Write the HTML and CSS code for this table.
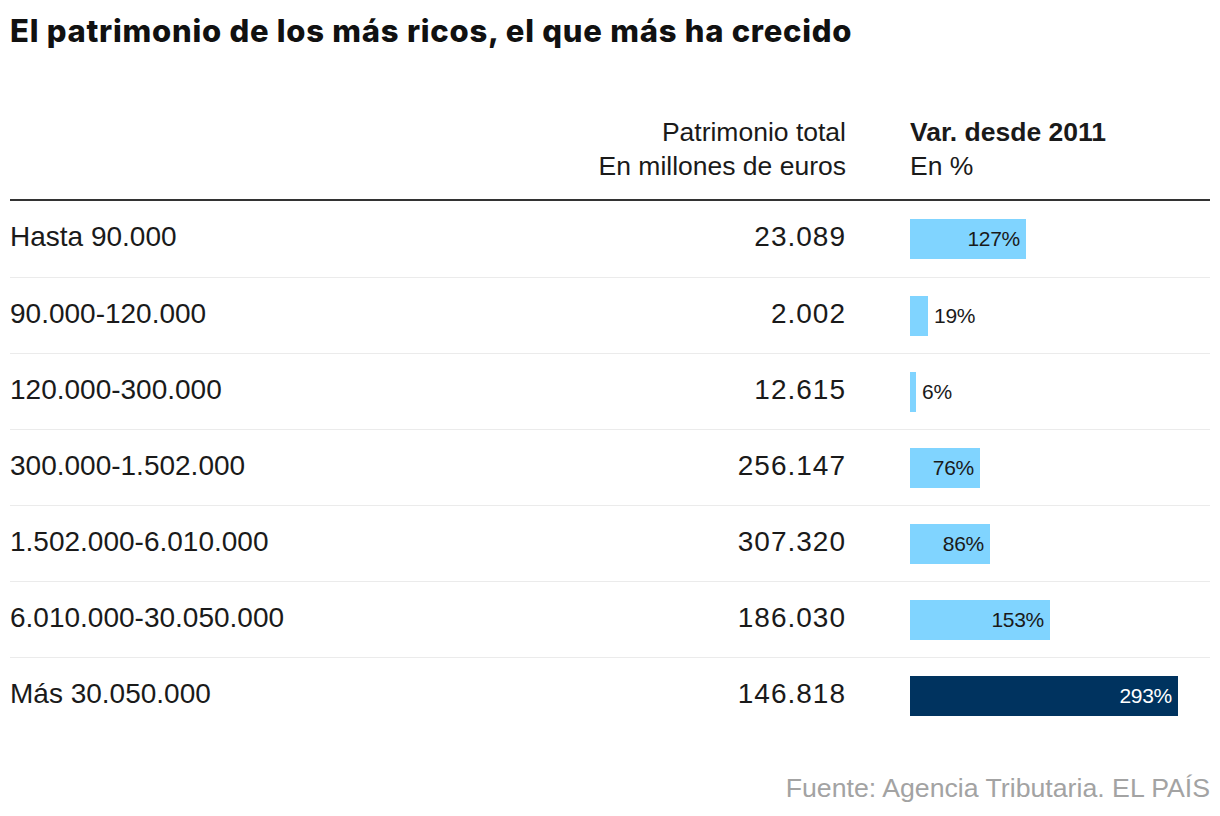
FILE: index.html
```html
<!DOCTYPE html>
<html lang="es">
<head>
<meta charset="utf-8">
<title>El patrimonio de los más ricos</title>
<link rel="stylesheet" href="styles.css">
</head>
<body>
<div class="page">
  <h1 class="title">El patrimonio de los más ricos, el que más ha crecido</h1>
  <div class="table">
    <div class="head">
      <div></div>
      <div class="hcol right">
        <div>Patrimonio total</div>
        <div>En millones de euros</div>
      </div>
      <div class="hcol">
        <div class="bold">Var. desde 2011</div>
        <div>En %</div>
      </div>
    </div>
    <div class="row">
      <div class="label">Hasta 90.000</div>
      <div class="value">23.089</div>
      <div class="barcell"><div class="bar" style="width:116px"><span class="in">127%</span></div></div>
    </div>
    <div class="row">
      <div class="label">90.000-120.000</div>
      <div class="value">2.002</div>
      <div class="barcell"><div class="bar" style="width:18px"></div><span class="out">19%</span></div>
    </div>
    <div class="row">
      <div class="label">120.000-300.000</div>
      <div class="value">12.615</div>
      <div class="barcell"><div class="bar" style="width:6px"></div><span class="out">6%</span></div>
    </div>
    <div class="row">
      <div class="label">300.000-1.502.000</div>
      <div class="value">256.147</div>
      <div class="barcell"><div class="bar" style="width:70px"><span class="in">76%</span></div></div>
    </div>
    <div class="row">
      <div class="label">1.502.000-6.010.000</div>
      <div class="value">307.320</div>
      <div class="barcell"><div class="bar" style="width:80px"><span class="in">86%</span></div></div>
    </div>
    <div class="row">
      <div class="label">6.010.000-30.050.000</div>
      <div class="value">186.030</div>
      <div class="barcell"><div class="bar" style="width:140px"><span class="in">153%</span></div></div>
    </div>
    <div class="row">
      <div class="label">Más 30.050.000</div>
      <div class="value">146.818</div>
      <div class="barcell"><div class="bar dark" style="width:268px"><span class="in">293%</span></div></div>
    </div>
  </div>
  <div class="source">Fuente: Agencia Tributaria. EL PAÍS</div>
</div>
</body>
</html>
```

FILE: styles.css
```css
* { box-sizing: border-box; }
html, body { margin: 0; padding: 0; background: #fff; }
body {
  font-family: "Liberation Sans", Arial, sans-serif;
  color: #1a1a1a;
}
.page {
  width: 1220px;
  padding: 12px 10px 0 10px;
}
.title {
  margin: 0;
  font-family: Inter, "Liberation Sans", Arial, sans-serif;
  font-size: 31px;
  line-height: 38px;
  font-weight: 800;
  letter-spacing: 0.75px;
  color: #111;
}
.table {
  margin-top: 65px;
}
.head, .row {
  display: grid;
  grid-template-columns: 1fr auto 300px;
  column-gap: 64px;
}
.head {
  font-size: 26.5px;
  line-height: 34px;
  padding-bottom: 16px;
  border-bottom: 2px solid #333;
}
.hcol.right { text-align: right; }
.bold { font-weight: 700; }
.row {
  height: 76px;
  align-items: center;
  font-size: 28px;
  border-top: 1px solid #ebebeb;
}
.head + .row { border-top: none; }
.label, .value { padding-bottom: 4px; }
.value { text-align: right; letter-spacing: 1px; }
.barcell {
  display: flex;
  align-items: center;
}
.bar {
  height: 40px;
  background: #80d4ff;
  display: flex;
  align-items: center;
  justify-content: flex-end;
  flex: none;
}
.bar.dark { background: #00335f; color: #fff; }
.in, .out {
  font-size: 21px;
  letter-spacing: -0.3px;
}
.in { padding-right: 6px; }
.out { margin-left: 6px; }
.source {
  margin-top: 38px;
  text-align: right;
  font-size: 26.7px;
  line-height: 34px;
  color: #a3a3a3;
}
```
